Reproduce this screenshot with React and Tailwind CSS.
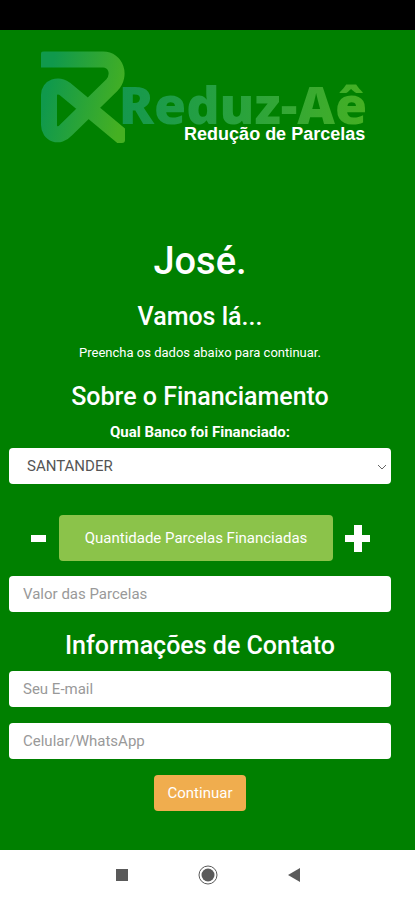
import { useState } from "react";

const banks = ["SANTANDER", "BRADESCO", "ITAÚ", "BANCO DO BRASIL", "CAIXA"];

function Logo() {
  return (
    <div className="flex justify-center pl-2">
      <svg viewBox="0 0 84 92" className="h-[92px] w-[84px] shrink-0" fill="none" aria-hidden="true">
        <defs>
          <linearGradient id="mark" gradientUnits="userSpaceOnUse" x1="8" y1="30" x2="84" y2="46">
            <stop offset="0" stopColor="#10994c" />
            <stop offset="1" stopColor="#45b022" />
          </linearGradient>
          <clipPath id="edge">
            <rect width="84" height="92" rx="3" />
          </clipPath>
        </defs>
        <path
          clipPath="url(#edge)"
          d="M0 8.5H62C75 8.5 80 24 71 34L25 79C18 87 8 83 8 74V44C8 36 17 33 24 38L90 93"
          stroke="url(#mark)"
          strokeWidth="16"
          strokeLinejoin="round"
        />
      </svg>
      <div className="-ml-1.5 flex flex-col items-end pt-8">
        <span className="bg-linear-to-r from-[#14984e] via-[#2aa33c] to-[#45b022] bg-clip-text font-['Open_Sans',sans-serif] text-[52px] leading-[42px] font-extrabold text-transparent">
          Reduz-Aê
        </span>
        <span className="pr-0.5 font-['Liberation_Sans',sans-serif] text-lg leading-[18px] font-bold">
          Redução de Parcelas
        </span>
      </div>
    </div>
  );
}

function Field({ label, type }) {
  return (
    <input
      type={type}
      aria-label={label}
      placeholder={label}
      className="block h-9 w-full rounded bg-white px-3.5 text-[15px] text-[#555] placeholder:text-[#999]"
    />
  );
}

export default function App() {
  const [count, setCount] = useState(0);
  return (
    <div className="flex min-h-screen flex-col bg-[#008000] font-[Roboto,sans-serif] text-white">
      <div className="h-[30px] bg-black" />
      <main className="grow pt-[21px] pr-6 pl-[9px] text-center">
        <Logo />
        <h1 className="mt-24 text-[38px] leading-[44px] font-medium">José.</h1>
        <h2 className="mt-[18px] text-[25px] leading-8 font-medium">Vamos lá...</h2>
        <p className="mt-3 text-[13px] leading-4">Preencha os dados abaixo para continuar.</p>
        <h2 className="mt-5 text-[25px] leading-8 font-medium">Sobre o Financiamento</h2>
        <label htmlFor="bank" className="mt-[9px] block text-[15px] leading-5 font-bold">
          Qual Banco foi Financiado:
        </label>
        <div className="relative mt-1.5">
          <select id="bank" className="block h-9 w-full appearance-none rounded bg-white px-[18px] text-[15px] text-[#555]">
            {banks.map((bank) => (
              <option key={bank}>{bank}</option>
            ))}
          </select>
          <svg viewBox="0 0 10 6" className="pointer-events-none absolute top-4 right-1 h-1.5 w-2.5" fill="none" stroke="#666" aria-hidden="true">
            <path d="M1 1L5 5L9 1" />
          </svg>
        </div>
        <div className="mt-[31px] flex items-center justify-between px-5">
          <button type="button" aria-label="Menos parcelas" onClick={() => setCount(Math.max(0, count - 1))} className="flex h-8 w-[18px] items-center justify-center">
            <svg viewBox="0 0 16 8" className="h-2 w-4" aria-hidden="true">
              <path d="M1 1H16V8H1Z" fill="white" />
            </svg>
          </button>
          <output className="mx-3 block grow rounded bg-[#8bc34a] text-[15px] leading-[46px]">
            {count === 0 ? "Quantidade Parcelas Financiadas" : count}
          </output>
          <button type="button" aria-label="Mais parcelas" onClick={() => setCount(count + 1)} className="flex h-8 w-[26px] items-center justify-center">
            <svg viewBox="0 0 26 28" className="h-7 w-[26px]" aria-hidden="true">
              <path d="M9 1H17V11H25V18H17V28H9V18H0V11H9Z" fill="white" />
            </svg>
          </button>
        </div>
        <div className="mt-[15px]">
          <Field label="Valor das Parcelas" type="text" />
        </div>
        <h2 className="mt-[18px] mb-[9px] text-[25px] leading-8 font-medium">Informações de Contato</h2>
        <div className="flex flex-col gap-4">
          <Field label="Seu E-mail" type="email" />
          <Field label="Celular/WhatsApp" type="tel" />
        </div>
        <button type="button" className="mt-4 h-9 rounded bg-[#f0ad4e] px-3.5 text-[15px]">
          Continuar
        </button>
      </main>
      <nav aria-label="Sistema" className="flex h-[50px] items-center justify-center gap-[66px] bg-white">
        <button type="button" aria-label="Recentes" className="p-1">
          <svg viewBox="0 0 12 12" className="size-3" aria-hidden="true">
            <rect width="12" height="12" fill="#5a5a5a" />
          </svg>
        </button>
        <button type="button" aria-label="Início">
          <svg viewBox="0 0 20 20" className="size-5" aria-hidden="true">
            <circle cx="10" cy="10" r="9" fill="none" stroke="#5a5a5a" strokeWidth="1" />
            <circle cx="10" cy="10" r="6.5" fill="#5a5a5a" />
          </svg>
        </button>
        <button type="button" aria-label="Voltar" className="p-1">
          <svg viewBox="0 0 12 14" className="h-3.5 w-3" aria-hidden="true">
            <path d="M12 0V14L0 7Z" fill="#5a5a5a" />
          </svg>
        </button>
      </nav>
    </div>
  );
}
